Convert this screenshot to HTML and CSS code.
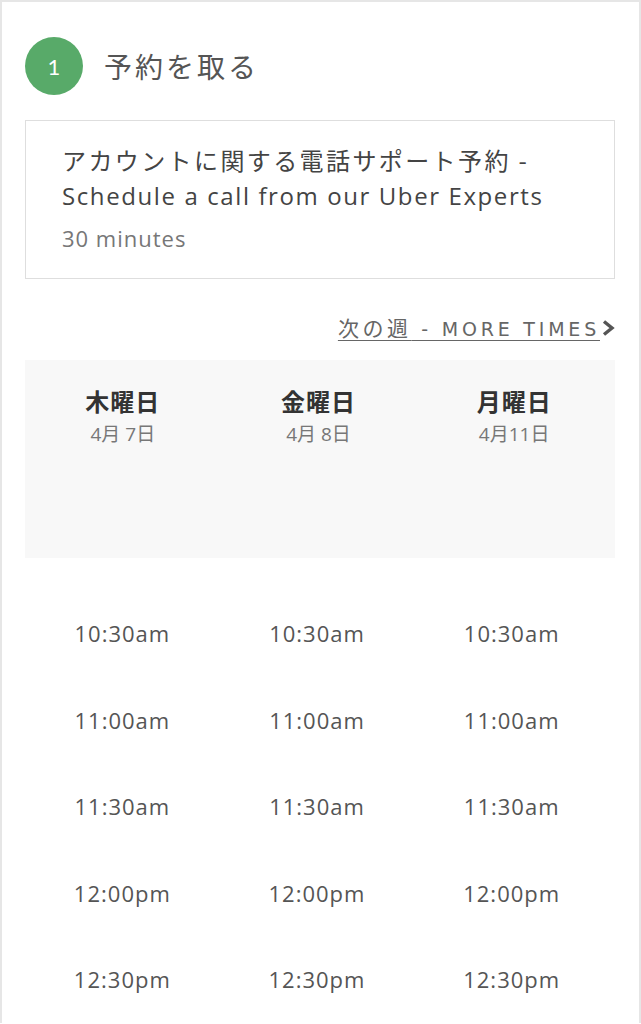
FILE: index.html
```html
<!DOCTYPE html>
<html lang="ja">
<head>
<meta charset="utf-8">
<title>予約を取る</title>
<link rel="stylesheet" href="styles.css">
</head>
<body>
<div class="panel">
  <div class="step">
    <div class="step-num">1</div>
    <h1 class="step-title">予約を取る</h1>
  </div>
  <div class="card">
    <div class="card-title"><span class="jp">アカウントに関する電話サポート予約 -</span> <span class="en">Schedule a call from our Uber Experts</span></div>
    <div class="card-duration">30 minutes</div>
  </div>
  <div class="more-row">
    <a class="more-link" href="#"><span class="jp-link">次の週</span> - MORE TIMES</a>
    <svg class="chev" width="14" height="18" viewBox="0 0 14 18"><polyline points="3,2.5 11,9 3,15.5" fill="none" stroke="#555" stroke-width="3.4"/></svg>
  </div>
  <div class="days">
    <div class="day"><div class="day-name">木曜日</div><div class="day-date">4月 7日</div></div>
    <div class="day"><div class="day-name">金曜日</div><div class="day-date">4月 8日</div></div>
    <div class="day"><div class="day-name">月曜日</div><div class="day-date">4月11日</div></div>
  </div>
  <div class="times">
    <div class="time">10:30am</div><div class="time">10:30am</div><div class="time">10:30am</div>
    <div class="time">11:00am</div><div class="time">11:00am</div><div class="time">11:00am</div>
    <div class="time">11:30am</div><div class="time">11:30am</div><div class="time">11:30am</div>
    <div class="time">12:00pm</div><div class="time">12:00pm</div><div class="time">12:00pm</div>
    <div class="time">12:30pm</div><div class="time">12:30pm</div><div class="time">12:30pm</div>
  </div>
</div>
</body>
</html>
```
FILE: styles.css
```css
html, body {
  margin: 0;
  padding: 0;
  background: #ffffff;
}
body {
  font-family: "Open Sans", "Noto Sans CJK JP", sans-serif;
  color: #444;
}
.panel {
  border: 2px solid #e6e6e6;
  border-bottom: none;
  min-height: 1022px;
  padding: 0 24px 0 23px;
  box-sizing: border-box;
}
.step {
  display: flex;
  align-items: center;
  gap: 21px;
  margin-top: 35px;
}
.step-num {
  width: 58px;
  height: 58px;
  border-radius: 50%;
  background: #58aa69;
  color: #fff;
  font-size: 22px;
  display: flex;
  align-items: center;
  justify-content: center;
  font-family: Lato, sans-serif;
}
.step-title {
  margin: 0;
  font-weight: normal;
  font-size: 28px;
  letter-spacing: 3px;
  color: #555;
  font-family: "Noto Sans CJK JP", sans-serif;
}
.card {
  margin-top: 25px;
  border: 1px solid #dedede;
  padding: 21px 36px 25px;
}
.card-title {
  color: #444;
}
.card-title .jp,
.card-title .en {
  display: block;
  line-height: 36px;
  height: 36px;
  white-space: nowrap;
}
.card-title .jp {
  font-family: "Noto Sans CJK JP", sans-serif;
  font-size: 24px;
  letter-spacing: 2.4px;
}
.card-title .en {
  font-family: "Open Sans", sans-serif;
  font-size: 24px;
  letter-spacing: 1.6px;
}
.card-duration {
  margin-top: 9px;
  font-size: 22px;
  line-height: 30px;
  height: 30px;
  letter-spacing: 1px;
  color: #777;
}
.more-row {
  display: flex;
  justify-content: flex-end;
  align-items: center;
  margin-top: 37px;
  height: 24px;
  gap: 1px;
}
.more-link {
  font-size: 19px;
  line-height: 24px;
  letter-spacing: 3.8px;
  color: #666;
  text-decoration: underline;
  text-underline-offset: 4px;
  font-family: "DejaVu Sans", sans-serif;
}
.more-link .jp-link {
  font-family: "Noto Sans CJK JP", sans-serif;
  font-size: 21px;
  letter-spacing: 3.5px;
}
.chev {
  display: block;
}
.days {
  margin-top: 20px;
  background: #f8f8f8;
  height: 198px;
  display: grid;
  grid-template-columns: repeat(3, 1fr);
  padding: 26px 3px 0 0;
  box-sizing: border-box;
  align-items: start;
}
.day {
  text-align: center;
}
.day-name {
  font-size: 24px;
  line-height: 30px;
  font-weight: bold;
  letter-spacing: 1px;
  color: #333;
  font-family: "Noto Sans CJK JP", sans-serif;
}
.day-date {
  margin-top: 6px;
  font-size: 19px;
  line-height: 24px;
  color: #777;
}
.times {
  margin-top: 32px;
  display: grid;
  grid-template-columns: repeat(3, 1fr);
  grid-auto-rows: 86.5px;
  padding-right: 6px;
}
.time {
  text-align: center;
  font-size: 22px;
  line-height: 86.5px;
  color: #555;
  letter-spacing: 1px;
}
```
